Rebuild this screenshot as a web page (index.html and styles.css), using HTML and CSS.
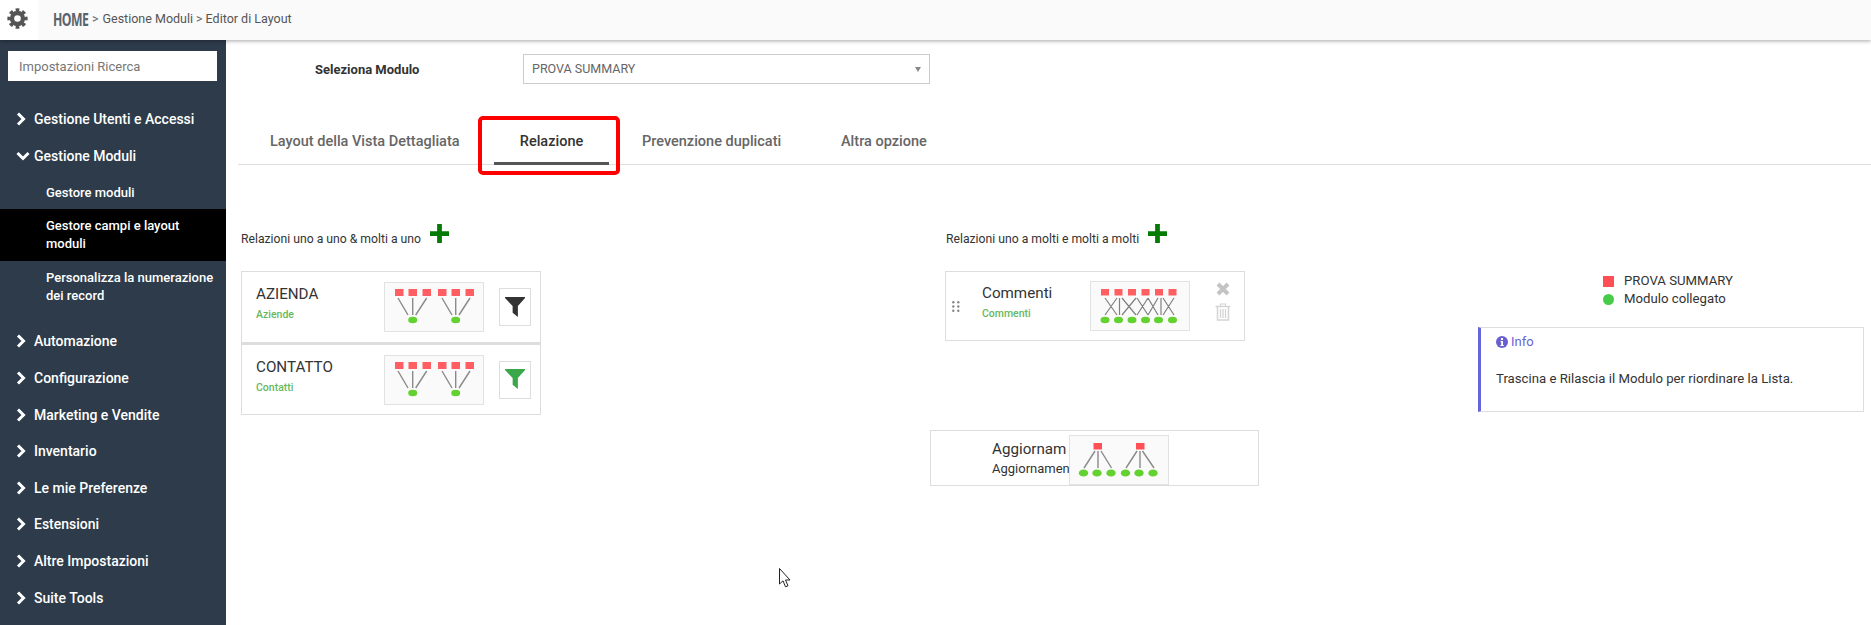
FILE: index.html
```html
<!DOCTYPE html>
<html lang="it">
<head>
  <meta charset="UTF-8">
  <meta name="viewport" content="width=device-width, initial-scale=1.0">
  <title>Editor di Layout</title>
  <link rel="stylesheet" href="styles.css">
</head>
<body>
  <svg class="defs" width="0" height="0">
    <defs>
      <!-- one source module fanning out to six -->
      <symbol id="rel-one-many" viewBox="1 1 98 48">
        <rect x="24.500" y="8" width="8.500" height="6.500" fill="#ff5055"/>
        <rect x="67" y="8" width="8.500" height="6.500" fill="#ff5055"/>
        <path d="M26 16 L15 33 M29 16 V33 M32 16 L42.500 33 M68 16 L57 33 M71 16 V33 M73.500 16 L85 33" stroke="#8a8a8a" stroke-width="1.400" fill="none"/>
        <g fill="#63d12f">
          <ellipse cx="14.500" cy="38" rx="4.700" ry="3.600"/>
          <ellipse cx="28" cy="38" rx="4.700" ry="3.600"/>
          <ellipse cx="42" cy="38" rx="4.700" ry="3.600"/>
          <ellipse cx="56.500" cy="38" rx="4.700" ry="3.600"/>
          <ellipse cx="70" cy="38" rx="4.700" ry="3.600"/>
          <ellipse cx="84" cy="38" rx="4.700" ry="3.600"/>
        </g>
      </symbol>
      <!-- six source modules converging on two -->
      <symbol id="rel-many-one" viewBox="1 1 98 48">
        <g fill="#ff5f63">
          <rect x="11" y="7" width="8.500" height="7"/>
          <rect x="24.500" y="7" width="8.500" height="7"/>
          <rect x="38.500" y="7" width="8.500" height="7"/>
          <rect x="54" y="7" width="8.500" height="7"/>
          <rect x="67.500" y="7" width="8.500" height="7"/>
          <rect x="81.500" y="7" width="8.500" height="7"/>
        </g>
        <path d="M14 16 L24 33 M28.700 16 V33 M42.700 16 L31.700 33 M58 16 L68 33 M71.700 16 V33 M86 16 L75 33" stroke="#8a8a8a" stroke-width="1.400" fill="none"/>
        <ellipse cx="28.700" cy="38" rx="4.500" ry="3.300" fill="#63d12f"/>
        <ellipse cx="71.700" cy="38" rx="4.500" ry="3.300" fill="#63d12f"/>
      </symbol>
      <!-- six to six, crossing lines -->
      <symbol id="rel-many-many" viewBox="1 1 98 48">
        <g fill="#ff5f63">
          <rect x="11" y="8" width="8" height="6.500"/>
          <rect x="24.500" y="8" width="8" height="6.500"/>
          <rect x="38" y="8" width="8" height="6.500"/>
          <rect x="51.500" y="8" width="8" height="6.500"/>
          <rect x="65" y="8" width="8" height="6.500"/>
          <rect x="78.500" y="8" width="8" height="6.500"/>
        </g>
        <path d="M15 17 L27 34 M27 17 L15 34 M29.500 17 V34 M32 17 L46 34 M46 17 L32 34 M47 17 L58 34 M58 17 L47 34 M58 34 L68 17 M58 17 L68 34 M71 17 V34 M73 17 L84 34 M84 17 L73 34" stroke="#808080" stroke-width="1.200" fill="none"/>
        <g fill="#63d12f">
          <ellipse cx="15" cy="39" rx="4.500" ry="3.300"/>
          <ellipse cx="28.500" cy="39" rx="4.500" ry="3.300"/>
          <ellipse cx="42" cy="39" rx="4.500" ry="3.300"/>
          <ellipse cx="55.500" cy="39" rx="4.500" ry="3.300"/>
          <ellipse cx="68.500" cy="39" rx="4.500" ry="3.300"/>
          <ellipse cx="82.500" cy="39" rx="4.500" ry="3.300"/>
        </g>
      </symbol>
      <symbol id="chev-right" viewBox="0 0 10 14">
        <path d="M2 1.500 L7.500 7 L2 12.500" fill="none" stroke="#fff" stroke-width="3"/>
      </symbol>
      <symbol id="chev-down" viewBox="0 0 14 10">
        <path d="M1.500 2 L7 7.500 L12.500 2" fill="none" stroke="#fff" stroke-width="3"/>
      </symbol>
      <symbol id="plus" viewBox="0 0 20 20">
        <path d="M7.500 0 H12.500 V7.500 H20 V12.500 H12.500 V20 H7.500 V12.500 H0 V7.500 H7.500 Z" fill="#057a05"/>
      </symbol>
      <symbol id="funnel" viewBox="0 0 22 22">
        <path d="M0 0 H21 V1 L13.500 9.500 V21 L8 16.500 V9.500 L0 1 Z"/>
      </symbol>
    </defs>
  </svg>

  <header class="topbar">
    <div class="gear-box">
      <svg width="21" height="21" viewBox="0 0 24 24" fill="none" stroke="#555">
        <circle cx="12" cy="12" r="6.300" stroke-width="5"/>
        <circle cx="12" cy="12" r="9.800" stroke-width="3.600" pathLength="80" stroke-dasharray="5.500 4.500" stroke-dashoffset="2.750"/>
      </svg>
    </div>
    <nav class="crumbs">
      <span class="crumb-home">HOME</span>
      <span class="crumb-sep">&gt;</span>
      <span>Gestione Moduli</span>
      <span class="crumb-sep crumb-sep-tight">&gt;</span>
      <span>Editor di Layout</span>
    </nav>
  </header>

  <div class="page">
    <aside class="sidebar">
      <input class="side-search" type="text" placeholder="Impostazioni Ricerca">
      <ul class="menu">
        <li class="menu-item"><svg class="chev"><use href="#chev-right"/></svg>Gestione Utenti e Accessi</li>
        <li class="menu-item"><svg class="chev chev-open"><use href="#chev-down"/></svg>Gestione Moduli</li>
        <li class="sub-item sub-first">Gestore moduli</li>
        <li class="sub-item sub-active">Gestore campi e layout moduli</li>
        <li class="sub-item sub-last">Personalizza la numerazione dei record</li>
        <li class="menu-item"><svg class="chev"><use href="#chev-right"/></svg>Automazione</li>
        <li class="menu-item"><svg class="chev"><use href="#chev-right"/></svg>Configurazione</li>
        <li class="menu-item"><svg class="chev"><use href="#chev-right"/></svg>Marketing e Vendite</li>
        <li class="menu-item"><svg class="chev"><use href="#chev-right"/></svg>Inventario</li>
        <li class="menu-item"><svg class="chev"><use href="#chev-right"/></svg>Le mie Preferenze</li>
        <li class="menu-item"><svg class="chev"><use href="#chev-right"/></svg>Estensioni</li>
        <li class="menu-item"><svg class="chev"><use href="#chev-right"/></svg>Altre Impostazioni</li>
        <li class="menu-item"><svg class="chev"><use href="#chev-right"/></svg>Suite Tools</li>
      </ul>
    </aside>

    <main class="content">
      <div class="module-row">
        <label class="module-label">Seleziona Modulo</label>
        <div class="module-select">
          <span>PROVA SUMMARY</span>
          <i class="select-caret"></i>
        </div>
      </div>

      <div class="tabs">
        <a class="tab tab-layout">Layout della Vista Dettagliata</a>
        <a class="tab tab-active">Relazione</a>
        <a class="tab tab-dupes">Prevenzione duplicati</a>
        <a class="tab tab-other">Altra opzione</a>
      </div>

      <div class="relations">
        <section class="rel-left">
          <h4 class="rel-title">Relazioni uno a uno &amp; molti a uno <svg class="plus"><use href="#plus"/></svg></h4>
          <div class="rel-card">
            <div class="rel-names">
              <div class="rel-name">AZIENDA</div>
              <div class="rel-sub">Aziende</div>
            </div>
            <svg class="diagram"><use href="#rel-many-one"/></svg>
            <div class="filter-btn"><svg class="funnel funnel-dark"><use href="#funnel"/></svg></div>
          </div>
          <div class="rel-card rel-card-next">
            <div class="rel-names">
              <div class="rel-name">CONTATTO</div>
              <div class="rel-sub">Contatti</div>
            </div>
            <svg class="diagram"><use href="#rel-many-one"/></svg>
            <div class="filter-btn"><svg class="funnel funnel-green"><use href="#funnel"/></svg></div>
          </div>
        </section>

        <section class="rel-mid">
          <h4 class="rel-title">Relazioni uno a molti e molti a molti <svg class="plus"><use href="#plus"/></svg></h4>
          <div class="rel-card rel-card-drag">
            <svg class="grip" width="8" height="11" viewBox="0 0 8 11" fill="#888">
              <circle cx="1.300" cy="1.300" r="1.200"/><circle cx="6.300" cy="1.300" r="1.200"/>
              <circle cx="1.300" cy="5.500" r="1.200"/><circle cx="6.300" cy="5.500" r="1.200"/>
              <circle cx="1.300" cy="9.700" r="1.200"/><circle cx="6.300" cy="9.700" r="1.200"/>
            </svg>
            <div class="rel-names rel-names-drag">
              <div class="rel-name">Commenti</div>
              <div class="rel-sub">Commenti</div>
            </div>
            <svg class="diagram"><use href="#rel-many-many"/></svg>
            <div class="card-actions">
              <svg width="14" height="14" viewBox="0 0 14 14">
                <path d="M2 2 L12 12 M12 2 L2 12" stroke="#c4c4c4" stroke-width="4" fill="none"/>
              </svg>
              <svg width="16" height="18" viewBox="0 0 16 18" fill="none" stroke="#d4d4d4">
                <path d="M0.500 3.500 H15.500" stroke-width="1.500"/>
                <path d="M5.500 3 V1 H10.500 V3" stroke-width="1.200"/>
                <path d="M2.500 4 V17 H13.500 V4" stroke-width="1.500"/>
                <path d="M5.500 6 V15 M8 6 V15 M10.500 6 V15" stroke-width="1.300"/>
              </svg>
            </div>
          </div>
          <div class="rel-card rel-card-update">
            <div class="update-names">
              <div class="update-name">Aggiornam</div>
              <div class="update-sub">Aggiornamen</div>
            </div>
            <svg class="diagram"><use href="#rel-one-many"/></svg>
          </div>
        </section>

        <section class="rel-side">
          <div class="legend">
            <div class="legend-row"><i class="legend-square"></i>PROVA SUMMARY</div>
            <div class="legend-row"><i class="legend-dot"></i>Modulo collegato</div>
          </div>
          <div class="info-box">
            <div class="info-head">
              <svg width="12" height="12" viewBox="0 0 12 12">
                <circle cx="6" cy="6" r="6" fill="#6a5fd0"/>
                <rect x="5" y="2" width="2" height="2" fill="#fff"/>
                <path d="M4.500 5 H7 V9 H7.800 V10 H4.400 V9 H5.200 V6 H4.500 Z" fill="#fff"/>
              </svg>
              Info
            </div>
            <p class="info-text">Trascina e Rilascia il Modulo per riordinare la Lista.</p>
          </div>
        </section>
      </div>
    </main>
  </div>

  <svg class="cursor" width="12" height="20" viewBox="0 0 12 20">
    <path d="M0.500 0.500 V16 L4 12.800 L6.500 18.800 L9 17.800 L6.500 12 H11 Z" fill="#fff" stroke="#222" stroke-width="1"/>
  </svg>
</body>
</html>
```

FILE: styles.css
```css
* {
  box-sizing: border-box;
}

body {
  margin: 0;
  height: 625px;
  overflow: hidden;
  font-family: Roboto, "Liberation Sans", sans-serif;
  font-size: 13px;
  color: #333;
  background-color: #fff;
}

.defs {
  position: absolute;
}

/* top bar */
.topbar {
  display: flex;
  height: 40px;
  background-color: #fafafa;
  box-shadow: 0 1px 4px rgba(0, 0, 0, 0.35);
  position: relative;
  z-index: 2;
}

.gear-box {
  width: 38px;
  display: flex;
  align-items: center;
  justify-content: center;
  padding: 0 3px 3px 0;
  background-color: #fff;
}

.crumbs {
  display: flex;
  align-items: center;
  gap: 4px;
  padding-left: 15px;
  padding-bottom: 3px;
  color: #555;
  font-size: 12.500px;
}

.crumb-home {
  font-family: "Open Sans", sans-serif;
  font-weight: 700;
  font-size: 18px;
  letter-spacing: -0.800px;
  color: #59646f;
  transform: scaleX(0.68);
  transform-origin: left;
  margin-right: -17px;
}

.crumb-sep {
  color: #666;
}

.crumb-sep-tight {
  margin: 0 -1px;
}

/* sidebar */
.page {
  display: flex;
  height: 585px;
}

.sidebar {
  width: 226px;
  flex: none;
  background-color: #2d3b4a;
  padding-top: 11px;
}

.side-search {
  display: block;
  width: 209px;
  height: 30px;
  margin-left: 8px;
  padding: 0 11px;
  border: 0;
  border-radius: 0;
  font-family: inherit;
  font-size: 13px;
  background-color: #fff;
}

.side-search::placeholder {
  color: #777;
  opacity: 1;
}

.menu {
  list-style: none;
  margin: 20px 0 0;
  padding: 0;
  color: #fff;
}

.menu-item {
  display: flex;
  align-items: center;
  height: 36.600px;
  padding-left: 16px;
  font-size: 14px;
  font-weight: 500;
}

.chev {
  width: 10px;
  height: 14px;
  margin-right: 8px;
}

.chev-open {
  width: 14px;
  height: 10px;
  margin-right: 4px;
}

.sub-item {
  padding: 8px 10px 8px 46px;
  font-size: 13px;
  font-weight: 500;
  line-height: 18px;
  min-height: 34px;
}

.sub-first {
  padding-top: 9px;
  padding-bottom: 7px;
  margin-top: 1px;
}

.sub-active {
  background-color: #000;
}

.sub-last {
  margin-bottom: 10px;
}

/* main area */
.content {
  flex: 1;
  min-width: 0;
}

.module-row {
  display: flex;
  align-items: center;
  padding-top: 14px;
}

.module-label {
  width: 297px;
  padding-left: 89px;
  font-size: 13px;
  font-weight: 700;
  color: #333;
}

.module-select {
  width: 407px;
  height: 30px;
  border: 1px solid #ccc;
  display: flex;
  align-items: center;
  justify-content: space-between;
  padding: 0 8px 2px;
  font-size: 12.500px;
  color: #666;
}

.select-caret {
  border-left: 3px solid transparent;
  border-right: 3px solid transparent;
  border-top: 5px solid #888;
  margin-top: 2px;
}

.tabs {
  display: flex;
  align-items: flex-end;
  height: 81px;
  margin-left: 12px;
  border-bottom: 1px solid #ddd;
  font-size: 14.500px;
  font-weight: 500;
  color: #666;
}

.tab {
  padding-bottom: 14px;
}

.tab-layout {
  margin-left: 32px;
  width: 224px;
}

.tab-active {
  position: relative;
  width: 115px;
  text-align: center;
  color: #333;
  border-bottom: 3px solid #555;
  padding-bottom: 12px;
  margin-bottom: -1px;
}

/* callout drawn round the current tab */
.tab-active::after {
  content: "";
  position: absolute;
  left: -16px;
  right: -11px;
  top: -17px;
  bottom: -13px;
  border: 4px solid #f00;
  border-radius: 5px;
}

.tab-dupes {
  margin-left: 33px;
  width: 199px;
}

.tab-other {
  width: 90px;
}

.relations {
  position: relative;
  display: flex;
}

.rel-left {
  width: 704px;
  padding-left: 15px;
}

.rel-mid {
  width: 519px;
}

.rel-title {
  display: flex;
  align-items: center;
  height: 24px;
  margin: 62px 0 20px;
  font-size: 12.200px;
  font-weight: 400;
  color: #333;
}

.rel-mid .rel-title {
  padding-left: 16px;
}

.plus {
  width: 19px;
  height: 19px;
  margin: -11px 0 0 9px;
}

.rel-card {
  display: flex;
  align-items: center;
  width: 300px;
  height: 72px;
  border: 1px solid #ddd;
  padding: 0 9px 0 14px;
}

.rel-card-next {
  border-top-width: 2px;
}

.rel-names {
  width: 128px;
  padding-bottom: 8px;
}

.rel-name {
  font-size: 15.200px;
  color: #333;
  margin-bottom: 5px;
}

.rel-sub {
  font-size: 10.500px;
  font-weight: 500;
  color: #67b85c;
}

.diagram {
  width: 100px;
  height: 50px;
  border: 1px solid #e2e2e2;
  background-color: #fafafa;
  flex: none;
}

.filter-btn {
  width: 32px;
  height: 38px;
  margin-left: 15px;
  border: 1px solid #ddd;
  display: flex;
  align-items: center;
  justify-content: center;
}

.funnel {
  width: 21px;
  height: 21px;
}

.funnel-dark {
  fill: #333;
}

.funnel-green {
  fill: #3aa84a;
}

.rel-card-drag {
  height: 70px;
  margin-left: 15px;
  padding: 0 0 0 6px;
}

.grip {
  flex: none;
}

.rel-names-drag {
  width: 108px;
  padding-left: 22px;
  box-sizing: content-box;
  padding-bottom: 9px;
}

.card-actions {
  display: flex;
  flex-direction: column;
  align-items: center;
  gap: 7px;
  margin-left: 25px;
  padding-bottom: 9px;
}

.rel-card-update {
  width: 329px;
  height: 56px;
  padding: 0 0 0 61px;
  margin-top: 89px;
  align-items: flex-end;
}

.update-names {
  width: 77px;
  white-space: nowrap;
  align-self: center;
  padding-bottom: 1px;
}

.update-name {
  font-size: 15.200px;
  margin-bottom: 3px;
}

.update-sub {
  font-size: 13px;
}

.rel-side {
  padding-top: 107px;
  flex: 1;
  margin-left: 29px;
}

.legend {
  padding-left: 125px;
  font-size: 13.200px;
  color: #333;
  line-height: 18px;
}

.legend-row {
  display: flex;
  align-items: center;
}

.legend-square,
.legend-dot {
  width: 11px;
  height: 11px;
  margin-right: 10px;
}

.legend-square {
  background-color: #ff4f54;
}

.legend-dot {
  background-color: #47cc47;
  border-radius: 50%;
}

.info-box {
  width: 386px;
  height: 85px;
  margin-top: 19px;
  border: 1px solid #ddd;
  border-left: 3px solid #6464dc;
  padding: 6px 15px;
  font-size: 13.200px;
}

.info-head {
  display: flex;
  align-items: center;
  gap: 3px;
  color: #6a62d8;
  font-size: 13px;
}

.info-text {
  margin: 22px 0 0;
  color: #333;
}

/* mouse pointer left on the page */
.cursor {
  position: absolute;
  left: 779px;
  top: 568px;
  z-index: 3;
}
```
